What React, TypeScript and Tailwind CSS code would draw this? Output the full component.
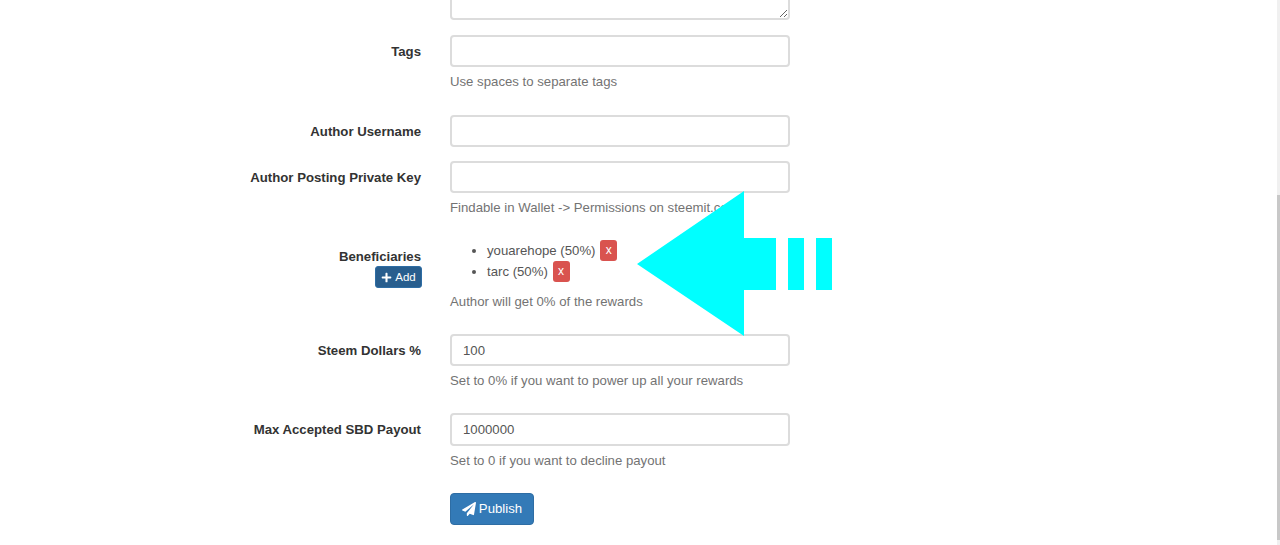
import { ReactNode } from "react";
import { FaPaperPlane, FaPlus } from "react-icons/fa";

const inputClass = "block w-full rounded-[4px] border-2 border-[#dcdcdc] bg-white px-[11px] text-[13.2px] text-[#555] outline-none";

function Row({ label, help, className, children }: { label: ReactNode; help?: string; className?: string; children: ReactNode }) {
  return (
    <div className={`flex ${className ?? ""}`}>
      <div className="w-[421px] pt-[7px] text-right text-[13.2px] font-bold leading-[20px] text-[#333] shrink-0">{label}</div>
      <div className="ml-[29px] w-[340px]">
        {children}
        {help && <p className="mt-[5px] text-[13.2px] leading-[20px] text-[#737373]">{help}</p>}
      </div>
    </div>
  );
}

function Beneficiary({ name }: { name: string }) {
  return (
    <li className="h-[21px] leading-[21px]">
      {name} (50%){" "}
      <button className="ml-[1px] inline-block h-[21px] w-[17px] rounded-[3px] bg-[#d9534f] text-center align-top text-[12px] leading-[21px] text-white">x</button>
    </li>
  );
}

export default function App() {
  return (
    <div className="relative flex h-[545px] w-[1280px] overflow-hidden bg-white font-['Liberation_Sans',Arial,sans-serif]">
      <main className="flex-1 -mt-[60px]">
        <Row label="" className="mb-[15px]">
          <textarea className="block h-[80px] w-full rounded-[4px] border-2 border-[#dcdcdc] bg-white" />
        </Row>
        <Row label="Tags" help="Use spaces to separate tags" className="mb-[23px]">
          <input className={`${inputClass} h-[32px]`} />
        </Row>
        <Row label="Author Username" className="mb-[14px]">
          <input className={`${inputClass} h-[32px]`} />
        </Row>
        <Row label="Author Posting Private Key" help="Findable in Wallet -> Permissions on steemit.com" className="mb-[22px]">
          <input className={`${inputClass} h-[32px]`} />
        </Row>
        <Row
          label={
            <div className="flex flex-col items-end">
              <span>Beneficiaries</span>
              <button className="-mr-[1px] mt-[-1px] flex h-[22px] w-[47px] items-center justify-center gap-[3px] rounded-[3px] border border-[#2e6da4] bg-[#285e8e] text-[11.5px] font-normal text-white">
                <FaPlus className="h-[11px] w-[11px]" />
                Add
              </button>
            </div>
          }
          className="mb-[22px]"
        >
          <ul className="list-disc pl-[37px] text-[13.2px] text-[#555]">
            <Beneficiary name="youarehope" />
            <Beneficiary name="tarc" />
          </ul>
          <p className="mt-[10px] text-[13.2px] leading-[20px] text-[#737373]">Author will get 0% of the rewards</p>
        </Row>
        <Row label="Steem Dollars %" help="Set to 0% if you want to power up all your rewards" className="mb-[22px]">
          <input className={`${inputClass} h-[32px]`} defaultValue="100" />
        </Row>
        <Row label="Max Accepted SBD Payout" help="Set to 0 if you want to decline payout" className="mb-[22px]">
          <input className={`${inputClass} h-[33px]`} defaultValue="1000000" />
        </Row>
        <div className="ml-[450px]">
          <button className="flex h-[32px] w-[84px] items-center justify-center gap-[3px] rounded-[4px] border border-[#2e6da4] bg-[#337ab7] text-[13.2px] text-white">
            <FaPaperPlane className="h-[14px] w-[14px]" />
            Publish
          </button>
        </div>
      </main>
      <div className="flex w-[3px] shrink-0 flex-col bg-[#f0f0f0] pt-[195px] pb-[5px]">
        <div className="flex-1 bg-[#c8c8c8]" />
      </div>
      <svg className="absolute left-[630px] top-[185px]" width="210" height="160" viewBox="630 185 210 160">
        <path d="M637 264 L744 191 V238 H776 V290 H744 V336 Z M788 238 H804 V290 H788 Z M816 238 H832 V290 H816 Z" fill="#00ffff" />
      </svg>
    </div>
  );
}
